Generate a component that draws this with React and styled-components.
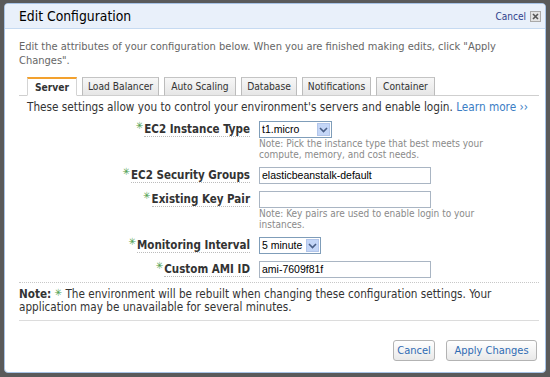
import React from "react";
import styled, { createGlobalStyle } from "styled-components";

const GlobalStyles = createGlobalStyle`
  * {
    margin: 0;
    padding: 0;
    box-sizing: border-box;
  }
  html, body {
    width: 550px;
    height: 377px;
    overflow: hidden;
    background: #5a5a5a;
  }
  body {
    font-family: "DejaVu Sans Condensed", "DejaVu Sans", Verdana, sans-serif;
    font-stretch: condensed;
  }
`;

const tabs = [
  { name: "Server", width: 50 },
  { name: "Load Balancer", width: 77 },
  { name: "Auto Scaling", width: 72 },
  { name: "Database", width: 56 },
  { name: "Notifications", width: 69 },
  { name: "Container", width: 59 },
];

const fields = [
  {
    label: "EC2 Instance Type",
    kind: "select",
    value: "t1.micro",
    width: 73,
    note: ["Note: Pick the instance type that best meets your", "compute, memory, and cost needs."],
  },
  { label: "EC2 Security Groups", kind: "input", value: "elasticbeanstalk-default", width: 172 },
  {
    label: "Existing Key Pair",
    kind: "input",
    value: "",
    width: 172,
    note: ["Note: Key pairs are used to enable login to your", "instances."],
  },
  { label: "Monitoring Interval", kind: "select", value: "5 minute", width: 62 },
  { label: "Custom AMI ID", kind: "input", value: "ami-7609f81f", width: 172 },
];

function App() {
  return (
    <>
      <GlobalStyles />
      <Backdrop>
        <Dialog>
          <Header>
            <Title>Edit Configuration</Title>
            <HeaderActions>
              <HeaderLink>Cancel</HeaderLink>
              <CloseBox>
                <svg width="7" height="7" viewBox="0 0 7 7">
                  <path d="M1 1L6 6M6 1L1 6" stroke="#555" strokeWidth="1.6" />
                </svg>
              </CloseBox>
            </HeaderActions>
          </Header>
          <Body>
            <Intro>
              Edit the attributes of your configuration below. When you are finished making edits, click "Apply
              Changes".
            </Intro>
            <TabStrip>
              {tabs.map((t, i) => (
                <Tab key={t.name} $active={i === 0} $w={t.width}>
                  {t.name}
                </Tab>
              ))}
            </TabStrip>
            <Lead>
              These settings allow you to control your environment's servers and enable login.{" "}
              <LearnMore>Learn more ››</LearnMore>
            </Lead>
            <Form>
              {fields.map((f) => (
                <React.Fragment key={f.label}>
                  <LabelCell>
                    <Req>✳</Req>
                    <LabelText>{f.label}</LabelText>
                  </LabelCell>
                  <FieldCell>
                    {f.kind === "select" ? (
                      <Select $w={f.width}>
                        <SelectValue>{f.value}</SelectValue>
                        <SelectArrow>
                          <svg width="9" height="6" viewBox="0 0 9 6">
                            <path d="M1 1L4.5 4.5L8 1" fill="none" stroke="#4a5f86" strokeWidth="1.6" />
                          </svg>
                        </SelectArrow>
                      </Select>
                    ) : (
                      <TextBox $w={f.width}>{f.value}</TextBox>
                    )}
                    {f.note && (
                      <FieldNote>
                        {f.note[0]}
                        <br />
                        {f.note[1]}
                      </FieldNote>
                    )}
                  </FieldCell>
                </React.Fragment>
              ))}
            </Form>
            <NoteBox>
              <strong>Note:</strong> <NoteStar>✳</NoteStar> The environment will be rebuilt when changing these
              configuration settings. Your
              <br />
              application may be unavailable for several minutes.
            </NoteBox>
            <Footer>
              <Button $w={42}>Cancel</Button>
              <Button $w={91}>Apply Changes</Button>
            </Footer>
          </Body>
        </Dialog>
      </Backdrop>
    </>
  );
}

export default App;

const Backdrop = styled.div`
  width: 550px;
  height: 377px;
  padding: 3px 4px 4px 4px;
`;

const Dialog = styled.div`
  height: 370px;
  background: #fff;
  border: 1px solid #a7c3e6;
  border-radius: 4px;
  overflow: hidden;
  display: flex;
  flex-direction: column;
`;

const Header = styled.div`
  height: 25px;
  flex: none;
  background: #e9f0fa;
  border-bottom: 1px solid #c6daf1;
  display: flex;
  align-items: center;
  justify-content: space-between;
  padding: 0 4px 0 14px;
`;

const Title = styled.h1`
  font-size: 13.8px;
  font-weight: normal;
  color: #000;
`;

const HeaderActions = styled.div`
  display: flex;
  align-items: center;
  gap: 4px;
`;

const HeaderLink = styled.span`
  font-size: 10px;
  color: #2f3f8c;
`;

const CloseBox = styled.span`
  width: 11px;
  height: 11px;
  border: 1px solid #a9a9a9;
  background: #e3e3e3;
  display: flex;
  align-items: center;
  justify-content: center;
`;

const Body = styled.div`
  flex: 1;
  display: flex;
  flex-direction: column;
  padding: 11px 6px 0 14px;
`;

const Intro = styled.p`
  font-size: 11px;
  line-height: 14px;
  color: #666;
`;

const TabStrip = styled.div`
  margin-top: 9px;
  display: flex;
  gap: 5px;
  padding-left: 8px;
  border-bottom: 1px solid #cfcfcf;
`;

const Tab = styled.div`
  width: ${({ $w }) => $w}px;
  height: 19px;
  margin-bottom: -1px;
  display: flex;
  align-items: center;
  justify-content: center;
  font-size: 10.2px;
  color: #333;
  font-weight: ${({ $active }) => ($active ? "bold" : "normal")};
  background: ${({ $active }) => ($active ? "#fff" : "linear-gradient(#f7f7f7, #e6e6e6)")};
  border: 1px solid ${({ $active }) => ($active ? "#d4d4d4" : "#bcbcbc")};
  border-top: ${({ $active }) => ($active ? "2px solid #f3a12e" : "1px solid #c4c4c4")};
  border-bottom: ${({ $active }) => ($active ? "1px solid #fff" : "1px solid #cfcfcf")};
`;

const Lead = styled.p`
  margin-top: 5px;
  padding-left: 8px;
  font-size: 11.7px;
  line-height: 13px;
  color: #333;
  white-space: nowrap;
`;

const LearnMore = styled.span`
  color: #3b7dc4;
`;

const Form = styled.div`
  margin-top: 7px;
  display: grid;
  grid-template-columns: 231px 1fr;
  column-gap: 9px;
  row-gap: 7px;
  padding-bottom: 4px;
  border-bottom: 1px dotted #c8c8c8;
`;

const LabelCell = styled.div`
  height: 17px;
  display: flex;
  align-items: center;
  justify-content: flex-end;
`;

const Req = styled.span`
  font-size: 10px;
  line-height: 10px;
  color: #4ea04e;
  align-self: flex-start;
  margin-right: 1px;
`;

const LabelText = styled.span`
  font-size: 11.5px;
  font-weight: bold;
  color: #333;
  line-height: 13px;
  border-bottom: 1px dotted #bcbcbc;
`;

const FieldCell = styled.div`
  display: flex;
  flex-direction: column;
  align-items: flex-start;
`;

const Select = styled.div`
  width: ${({ $w }) => $w}px;
  height: 17px;
  border: 1px solid #7f9db9;
  background: #fff;
  display: flex;
  align-items: stretch;
`;

const SelectValue = styled.span`
  flex: 1;
  min-width: 0;
  overflow: hidden;
  white-space: nowrap;
  padding-left: 2px;
  font-family: "Liberation Sans", Arial, sans-serif;
  font-size: 10.5px;
  line-height: 15px;
  color: #000;
`;

const SelectArrow = styled.span`
  flex: none;
  width: 13px;
  margin: 1px;
  background: #c4d6f7;
  border: 1px solid #b3c6ea;
  display: flex;
  align-items: center;
  justify-content: center;
`;

const TextBox = styled.div`
  width: ${({ $w }) => $w}px;
  height: 17px;
  border: 1px solid #a9b5c3;
  background: #fff;
  padding-left: 2px;
  font-family: "Liberation Sans", Arial, sans-serif;
  font-size: 10.5px;
  line-height: 15px;
  color: #000;
`;

const FieldNote = styled.p`
  font-size: 10px;
  line-height: 11px;
  color: #8a8a8a;
`;

const NoteBox = styled.p`
  padding: 5px 0 6px;
  font-size: 11.65px;
  line-height: 13px;
  color: #333;
  border-bottom: 1px solid #dcdcdc;
  white-space: nowrap;
`;

const NoteStar = styled.span`
  color: #4ea04e;
  font-size: 10px;
  line-height: 0;
  vertical-align: 2px;
`;

const Footer = styled.div`
  display: flex;
  justify-content: flex-end;
  gap: 11px;
  padding: 19px 2px 0 0;
`;

const Button = styled.button`
  width: ${({ $w }) => $w}px;
  height: 21px;
  padding: 0;
  font-family: inherit;
  font-stretch: condensed;
  font-size: 11px;
  color: #2f6bb3;
  background: linear-gradient(#ffffff, #e9e9e9);
  border: 1px solid #b3b3b3;
  border-radius: 3px;
`;
